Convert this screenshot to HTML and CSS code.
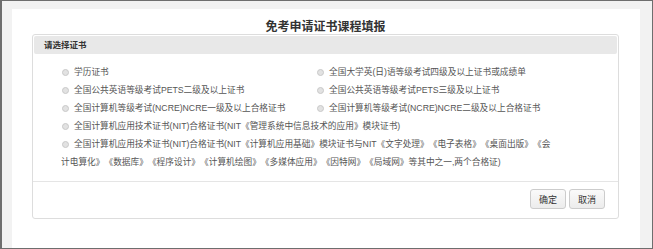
FILE: index.html
```html
<!DOCTYPE html>
<html lang="zh-CN">
<head>
    <meta charset="UTF-8">
    <meta name="viewport" content="width=device-width, initial-scale=1.0">
    <title>免考申请证书课程填报</title>
    <link rel="stylesheet" href="styles.css">
</head>
<body>
<div class="frame">
    <div class="page">
        <h1 class="title">免考申请证书课程填报</h1>
        <div class="panel">
            <div class="panel-heading">请选择证书</div>
            <div class="panel-body">
                <label class="option"><input type="radio" name="zs">学历证书</label>
                <label class="option"><input type="radio" name="zs">全国大学英(日)语等级考试四级及以上证书或成绩单</label>
                <label class="option"><input type="radio" name="zs">全国公共英语等级考试PETS二级及以上证书</label>
                <label class="option"><input type="radio" name="zs">全国公共英语等级考试PETS三级及以上证书</label>
                <label class="option"><input type="radio" name="zs">全国计算机等级考试(NCRE)NCRE一级及以上合格证书</label>
                <label class="option"><input type="radio" name="zs">全国计算机等级考试(NCRE)NCRE二级及以上合格证书</label>
                <label class="option wide"><input type="radio" name="zs">全国计算机应用技术证书(NIT)合格证书(NIT《管理系统中信息技术的应用》模块证书)</label>
                <label class="option wide"><input type="radio" name="zs">全国计算机应用技术证书(NIT)合格证书(NIT《计算机应用基础》模块证书与NIT《文字处理》《电子表格》《桌面出版》《会计电算化》《数据库》《程序设计》《计算机绘图》《多媒体应用》《因特网》《局域网》等其中之一,两个合格证)</label>
            </div>
            <div class="panel-footer">
                <button type="button">确定</button>
                <button type="button">取消</button>
            </div>
        </div>
    </div>
</div>
</body>
</html>
```

FILE: styles.css
```css
body {
    margin: 0;
    font-family: "Liberation Sans", "Noto Sans CJK SC", sans-serif;
    color: #555;
    text-spacing-trim: space-all;
}

.frame {
    height: 249px;
    box-sizing: border-box;
    border: 1px solid #6e6e6e;
    border-left-width: 2px;
    background-color: #f2f2f2;
    padding: 8px 12px 0 10px;
}

.page {
    height: 100%;
    background-color: #fff;
    padding: 0 21px 0 20px;
    overflow: hidden;
}

.title {
    margin: 0;
    padding-top: 11px;
    line-height: 14px;
    font-size: 12px;
    font-weight: bold;
    color: #333;
    text-align: center;
}

.panel {
    border: 1px solid #ddd;
    border-radius: 3px;
}

.panel-heading {
    margin: 1px;
    height: 18px;
    line-height: 18px;
    padding-left: 10px;
    background-color: #e8e8e8;
    border-radius: 2px;
    font-size: 8.5px;
    font-weight: bold;
    color: #333;
}

.panel-body {
    display: grid;
    grid-template-columns: 255px 1fr;
    padding: 8px 64px 10px 28px;
    border-bottom: 1px solid #e5e5e5;
}

.option {
    font-size: 8.7px;
    line-height: 18px;
}

.option.wide {
    grid-column: 1 / -1;
}

.option input {
    -webkit-appearance: none;
    appearance: none;
    display: inline-block;
    width: 7px;
    height: 7px;
    margin: 0 5px 0 1px;
    vertical-align: -1px;
    border: 1px solid #c9c9c9;
    border-radius: 50%;
    background-color: #e2e2e2;
    box-sizing: border-box;
}

.panel-footer {
    display: flex;
    justify-content: flex-end;
    gap: 3px;
    padding: 7px 13px 9px 0;
}

button {
    width: 36px;
    height: 20px;
    padding: 0;
    font-family: inherit;
    font-size: 9px;
    color: #333;
    background: linear-gradient(#fafafa, #ececec);
    border: 1px solid #ccc;
    border-radius: 3px;
}
```
